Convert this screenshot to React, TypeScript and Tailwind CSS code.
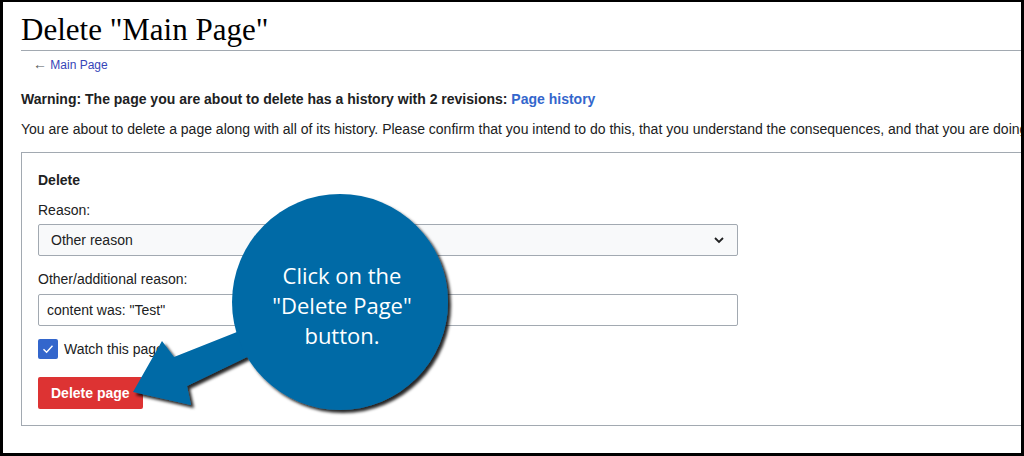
import React from "react";

const sans = { fontFamily: '"Liberation Sans", Arial, sans-serif' };

function Callout() {
  return (
    <>
      <svg
        className="pointer-events-none absolute inset-0"
        width="1024"
        height="456"
        viewBox="0 0 1024 456"
      >
        <defs>
          <filter id="shade" x="-20%" y="-20%" width="140%" height="140%">
            <feDropShadow dx="3" dy="3" stdDeviation="1.6" floodColor="#000" floodOpacity="0.85" />
          </filter>
        </defs>
        <g filter="url(#shade)" fill="#056aa6">
          <polygon points="133,392 162,341 174,357 262,322 272,345 187,386 191,405" />
          <circle cx="340" cy="302" r="108" />
        </g>
      </svg>
      <div
        className="pointer-events-none absolute left-[240px] top-[260px] w-[204px] text-center text-[22px] leading-[30px] text-white"
        style={{ fontFamily: '"Open Sans", sans-serif' }}
      >
        Click on the
        <br />
        "Delete Page"
        <br />
        button.
      </div>
    </>
  );
}

export default function App() {
  return (
    <div className="relative h-[456px] w-[1024px] bg-black pt-[2px] pb-[3px] pl-[3px] pr-[3px]">
      <div className="h-full w-full overflow-hidden bg-white">
        <div className="w-[1200px] pl-[18px] pt-[8px] text-[#202122]" style={sans}>
          <h1
            className="h-[41px] border-b border-[#a2a9b1] text-[31px] leading-[40px] text-black"
            style={{ fontFamily: '"Liberation Serif", "Times New Roman", serif' }}
          >
            Delete "Main Page"
          </h1>
          <div className="mt-[5px] pl-[12px] text-[12px] leading-[16px]">
            <span className="text-[14px] text-[#54595d]">←</span>{" "}
            <span className="text-[#3645b8]">Main Page</span>
          </div>
          <p className="mt-[16px] text-[14px] font-bold leading-[20px]">
            Warning: The page you are about to delete has a history with 2 revisions:{" "}
            <span className="text-[#3366cc]">Page history</span>
          </p>
          <p className="mt-[10px] whitespace-nowrap text-[14px] leading-[20px]">
            You are about to delete a page along with all of its history. Please confirm that you intend to do this, that you understand the consequences, and that you are doing
          </p>
          <div className="mt-[13px] w-[1100px] border border-[#a2a9b1] px-[16px] pt-[17px] pb-[16px] text-[14px]">
            <div className="font-bold leading-[20px]">Delete</div>
            <div className="mt-[10px] leading-[20px]">Reason:</div>
            <div className="mt-[4px] flex h-[32px] w-[700px] items-center justify-between rounded-[2px] border border-[#a2a9b1] bg-[#f8f9fa] pl-[12px] pr-[12px]">
              <span>Other reason</span>
              <svg width="12" height="12" viewBox="0 0 12 12" fill="none">
                <path d="M2 4 L6 8 L10 4" stroke="#202122" strokeWidth="1.8" />
              </svg>
            </div>
            <div className="mt-[13px] leading-[20px]">Other/additional reason:</div>
            <div className="mt-[5px] flex h-[32px] w-[700px] items-center rounded-[2px] border border-[#a2a9b1] bg-white pl-[8px]">
              content was: "Test"
            </div>
            <div className="mt-[13px] flex items-center gap-[6px]">
              <span className="flex h-[20px] w-[20px] items-center justify-center rounded-[2px] bg-[#3366cc]">
                <svg width="14" height="14" viewBox="0 0 14 14" fill="none">
                  <path d="M2.5 7.2 L5.6 10.2 L11.5 3.8" stroke="#fff" strokeWidth="1.4" />
                </svg>
              </span>
              <span className="leading-[20px]">Watch this page</span>
            </div>
            <button className="mt-[18px] flex h-[32px] items-center rounded-[2px] bg-[#dd3333] px-[13px] font-bold text-white">
              Delete page
            </button>
          </div>
        </div>
      </div>
      <Callout />
    </div>
  );
}
